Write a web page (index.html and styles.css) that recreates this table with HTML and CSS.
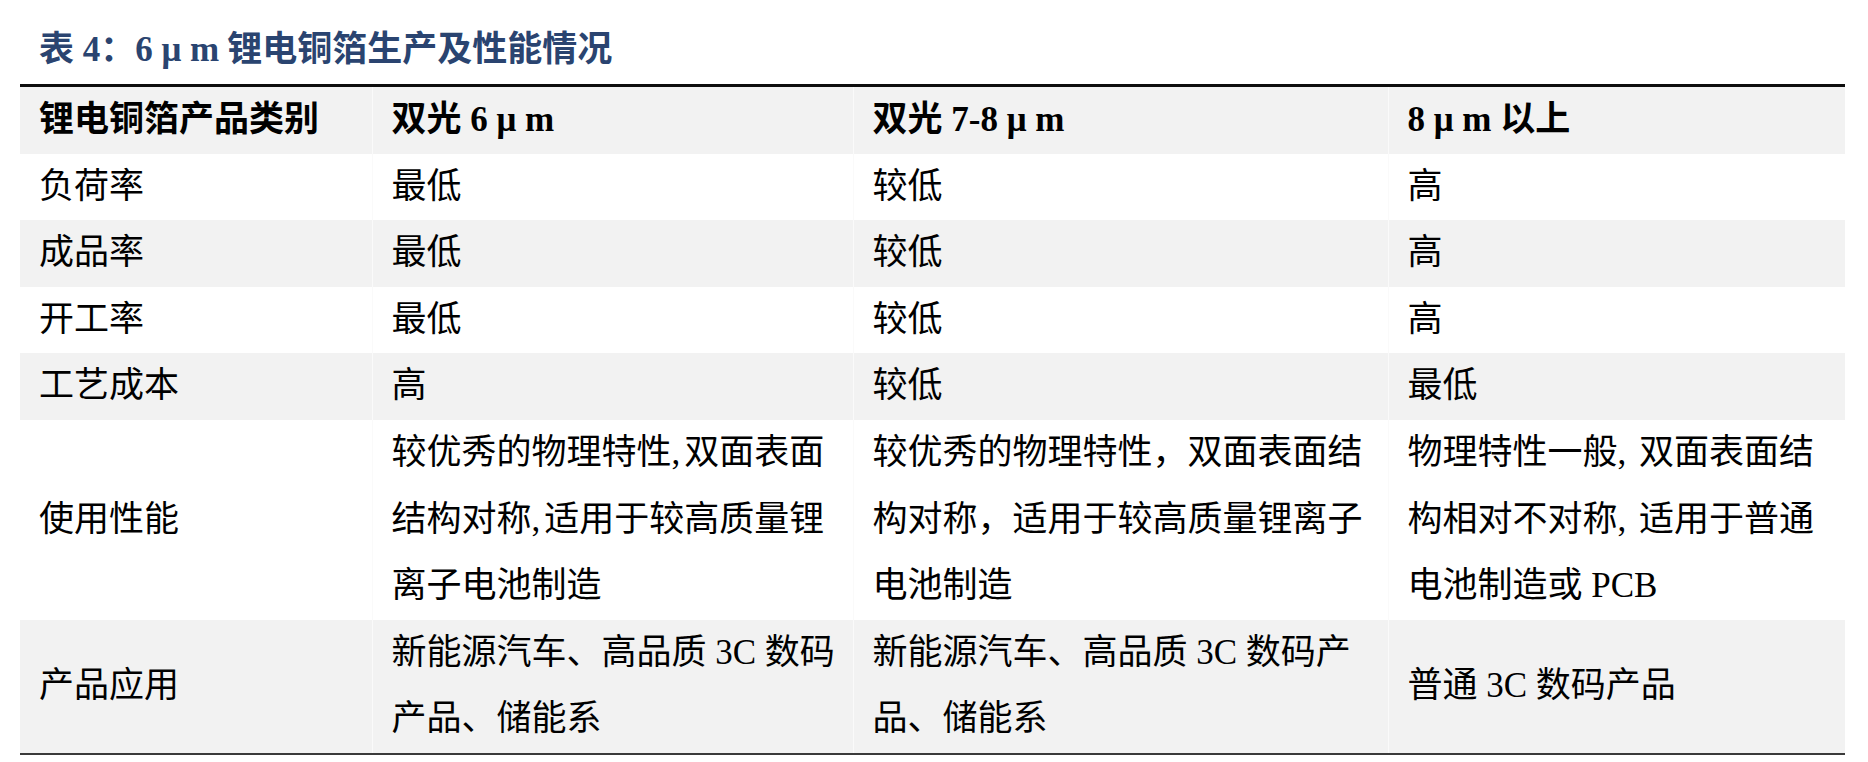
FILE: index.html
```html
<!DOCTYPE html>
<html lang="zh-CN">
<head>
<meta charset="utf-8">
<title>表4</title>
<link rel="stylesheet" href="styles.css">
</head>
<body>
<div class="page">
  <h1 class="title">表 4：<span class="unit">6 μ m</span>锂电铜箔生产及性能情况</h1>
  <table class="spec">
    <colgroup>
      <col class="c1"><col class="c2"><col class="c3"><col class="c4">
    </colgroup>
    <thead>
      <tr class="head">
        <th>锂电铜箔产品类别</th>
        <th>双光 6 μ m</th>
        <th>双光 7-8 μ m</th>
        <th>8 μ m 以上</th>
      </tr>
    </thead>
    <tbody>
      <tr>
        <td>负荷率</td><td>最低</td><td>较低</td><td>高</td>
      </tr>
      <tr class="alt">
        <td>成品率</td><td>最低</td><td>较低</td><td>高</td>
      </tr>
      <tr>
        <td>开工率</td><td>最低</td><td>较低</td><td>高</td>
      </tr>
      <tr class="alt">
        <td>工艺成本</td><td>高</td><td>较低</td><td>最低</td>
      </tr>
      <tr>
        <td>使用性能</td>
        <td>较优秀的物理特性<span class="comma">,</span>双面表面<br>结构对称<span class="comma">,</span>适用于较高质量锂<br>离子电池制造</td>
        <td>较优秀的物理特性，双面表面结<br>构对称，适用于较高质量锂离子<br>电池制造</td>
        <td>物理特性一般<span class="comma">,</span> 双面表面结<br>构相对不对称<span class="comma">,</span> 适用于普通<br>电池制造或 PCB</td>
      </tr>
      <tr class="alt last">
        <td>产品应用</td>
        <td>新能源汽车、高品质 3C 数码<br>产品、储能系</td>
        <td>新能源汽车、高品质 3C 数码产<br>品、储能系</td>
        <td>普通 3C 数码产品</td>
      </tr>
    </tbody>
  </table>
</div>
</body>
</html>
```
FILE: styles.css
```css
html, body {
  margin: 0;
  padding: 0;
  background: #ffffff;
}

.page {
  padding: 30px 0 0 20px;
  font-family: "Liberation Serif", "Noto Sans CJK SC", serif;
  color: #000;
}

.title {
  margin: 0 0 14px 19px;
  height: 40px;
  line-height: 40px;
  font-size: 35px;
  font-weight: 700;
  color: #2a4470;
  white-space: nowrap;
}

.title .unit {
  margin-right: 8px;
}

.spec {
  border-collapse: collapse;
  table-layout: fixed;
  width: 1825px;
  border-top: 3px solid #0d0d0d;
  border-bottom: 2px solid #3a3a3a;
}

.spec col.c1 { width: 352px; }
.spec col.c2 { width: 481px; }
.spec col.c3 { width: 535px; }
.spec col.c4 { width: 457px; }

.spec th,
.spec td {
  padding: 0 0 0 19px;
  font-size: 35px;
  line-height: 66.6px;
  text-align: left;
  vertical-align: middle;
  white-space: nowrap;
  border-left: 1px solid #fafafa;
}

.spec th:first-child,
.spec td:first-child {
  border-left: none;
}

.spec th {
  font-weight: 700;
  background: #f2f2f2;
}

.spec td {
  font-weight: 400;
}

.spec .comma {
  margin-right: 4px;
}

.spec tr.alt td {
  background: #f2f2f2;
}
```
